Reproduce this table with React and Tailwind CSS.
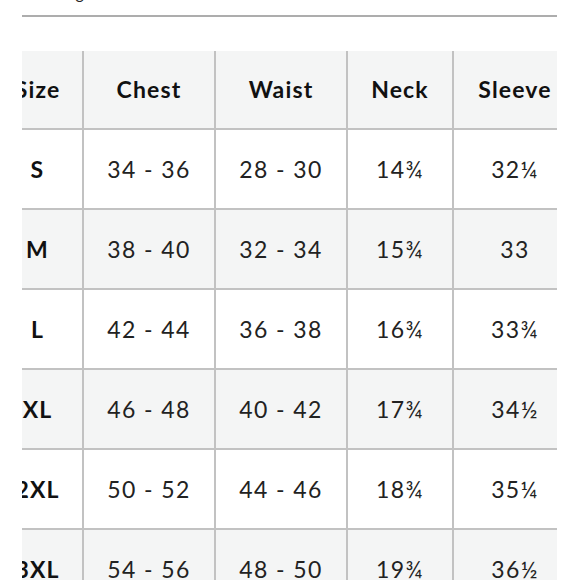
import React from 'react';

const rows = [
  { size: 'S', chest: '34 - 36', waist: '28 - 30', neck: '14¾', sleeve: '32¼' },
  { size: 'M', chest: '38 - 40', waist: '32 - 34', neck: '15¾', sleeve: '33' },
  { size: 'L', chest: '42 - 44', waist: '36 - 38', neck: '16¾', sleeve: '33¾' },
  { size: 'XL', chest: '46 - 48', waist: '40 - 42', neck: '17¾', sleeve: '34½' },
  { size: '2XL', chest: '50 - 52', waist: '44 - 46', neck: '18¾', sleeve: '35¼' },
  { size: '3XL', chest: '54 - 56', waist: '48 - 50', neck: '19¾', sleeve: '36½' },
];

const headers = ['Size', 'Chest', 'Waist', 'Neck', 'Sleeve'];

const App = () => {
  return (
    <div className="w-[578px] h-[580px] overflow-hidden bg-white font-['Lato',sans-serif] text-[#1a1a1a]">
      <div className="pl-[22px] pr-[21px]">
        <div className="-mt-[17px] ml-[21px] h-[20px] leading-[20px] text-[16px] text-[#222]">Sizing</div>
        <div className="mt-[12px] border-t-2 border-[#adadad]" />

        <div className="mt-[34px] w-[535px] overflow-hidden">
          <div className="-ml-[29px] w-[583px] grid grid-cols-[91px_132px_132px_106px_122px]">
            {headers.map((h, i) => (
              <div
                key={h}
                className={`h-[79px] flex items-center justify-center bg-[#f4f5f5] border-b-2 border-[#c2c2c2] text-[23px] font-bold tracking-[0.05em] text-[#111] ${i < 4 ? 'border-r-2' : ''}`}
              >
                {h}
              </div>
            ))}
            {rows.map((r, ri) => {
              const bg = ri % 2 === 1 ? 'bg-[#f4f5f5]' : 'bg-white';
              const cells = [r.size, r.chest, r.waist, r.neck, r.sleeve];
              return cells.map((c, i) => (
                <div
                  key={ri + '-' + i}
                  className={`h-[80px] flex items-center justify-center ${bg} border-b-2 border-[#c2c2c2] text-[23px] ${i === 0 ? 'font-bold tracking-[0.05em] text-[#111]' : 'font-normal tracking-[0.06em] text-[#222]'} ${i < 4 ? 'border-r-2' : ''}`}
                >
                  {c}
                </div>
              ));
            })}
          </div>
        </div>
      </div>
    </div>
  );
};

export default App;
